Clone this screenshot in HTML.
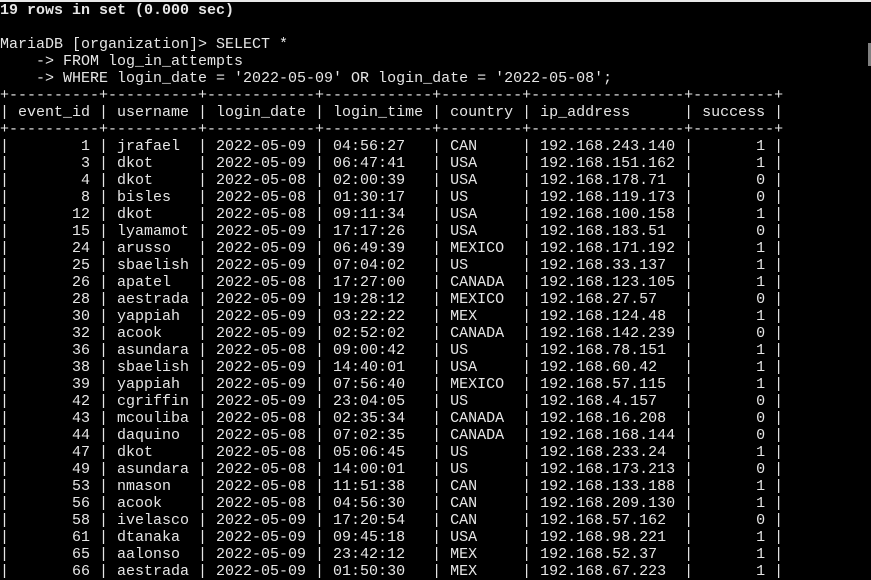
<!DOCTYPE html>
<html><head><meta charset="utf-8"><style>
html,body{margin:0;padding:0;background:#000;width:871px;height:569px;overflow:hidden}
.top{position:absolute;left:0;top:0;width:871px;height:2px;background:#e8e8e8}
pre{position:absolute;left:0;top:2px;margin:0;font-family:"Liberation Mono",monospace;font-size:15px;line-height:17px;color:#e6e6e6;white-space:pre}
b{font-weight:bold}
.sb{position:absolute;left:868px;top:43px;width:3px;height:23px;background:#808080}
</style></head><body>
<div class="top"></div>
<pre><b>19 rows in set (0.000 sec)</b>

MariaDB [organization]&gt; SELECT *
    -&gt; FROM log_in_attempts
    -&gt; WHERE login_date = '2022-05-09' OR login_date = '2022-05-08';
+----------+----------+------------+------------+---------+-----------------+---------+
| event_id | username | login_date | login_time | country | ip_address      | success |
+----------+----------+------------+------------+---------+-----------------+---------+
|        1 | jrafael  | 2022-05-09 | 04:56:27   | CAN     | 192.168.243.140 |       1 |
|        3 | dkot     | 2022-05-09 | 06:47:41   | USA     | 192.168.151.162 |       1 |
|        4 | dkot     | 2022-05-08 | 02:00:39   | USA     | 192.168.178.71  |       0 |
|        8 | bisles   | 2022-05-08 | 01:30:17   | US      | 192.168.119.173 |       0 |
|       12 | dkot     | 2022-05-08 | 09:11:34   | USA     | 192.168.100.158 |       1 |
|       15 | lyamamot | 2022-05-09 | 17:17:26   | USA     | 192.168.183.51  |       0 |
|       24 | arusso   | 2022-05-09 | 06:49:39   | MEXICO  | 192.168.171.192 |       1 |
|       25 | sbaelish | 2022-05-09 | 07:04:02   | US      | 192.168.33.137  |       1 |
|       26 | apatel   | 2022-05-08 | 17:27:00   | CANADA  | 192.168.123.105 |       1 |
|       28 | aestrada | 2022-05-09 | 19:28:12   | MEXICO  | 192.168.27.57   |       0 |
|       30 | yappiah  | 2022-05-09 | 03:22:22   | MEX     | 192.168.124.48  |       1 |
|       32 | acook    | 2022-05-09 | 02:52:02   | CANADA  | 192.168.142.239 |       0 |
|       36 | asundara | 2022-05-08 | 09:00:42   | US      | 192.168.78.151  |       1 |
|       38 | sbaelish | 2022-05-09 | 14:40:01   | USA     | 192.168.60.42   |       1 |
|       39 | yappiah  | 2022-05-09 | 07:56:40   | MEXICO  | 192.168.57.115  |       1 |
|       42 | cgriffin | 2022-05-09 | 23:04:05   | US      | 192.168.4.157   |       0 |
|       43 | mcouliba | 2022-05-08 | 02:35:34   | CANADA  | 192.168.16.208  |       0 |
|       44 | daquino  | 2022-05-08 | 07:02:35   | CANADA  | 192.168.168.144 |       0 |
|       47 | dkot     | 2022-05-08 | 05:06:45   | US      | 192.168.233.24  |       1 |
|       49 | asundara | 2022-05-08 | 14:00:01   | US      | 192.168.173.213 |       0 |
|       53 | nmason   | 2022-05-08 | 11:51:38   | CAN     | 192.168.133.188 |       1 |
|       56 | acook    | 2022-05-08 | 04:56:30   | CAN     | 192.168.209.130 |       1 |
|       58 | ivelasco | 2022-05-09 | 17:20:54   | CAN     | 192.168.57.162  |       0 |
|       61 | dtanaka  | 2022-05-09 | 09:45:18   | USA     | 192.168.98.221  |       1 |
|       65 | aalonso  | 2022-05-09 | 23:42:12   | MEX     | 192.168.52.37   |       1 |
|       66 | aestrada | 2022-05-09 | 01:50:30   | MEX     | 192.168.67.223  |       1 |</pre>
<div class="sb"></div>
</body></html>
